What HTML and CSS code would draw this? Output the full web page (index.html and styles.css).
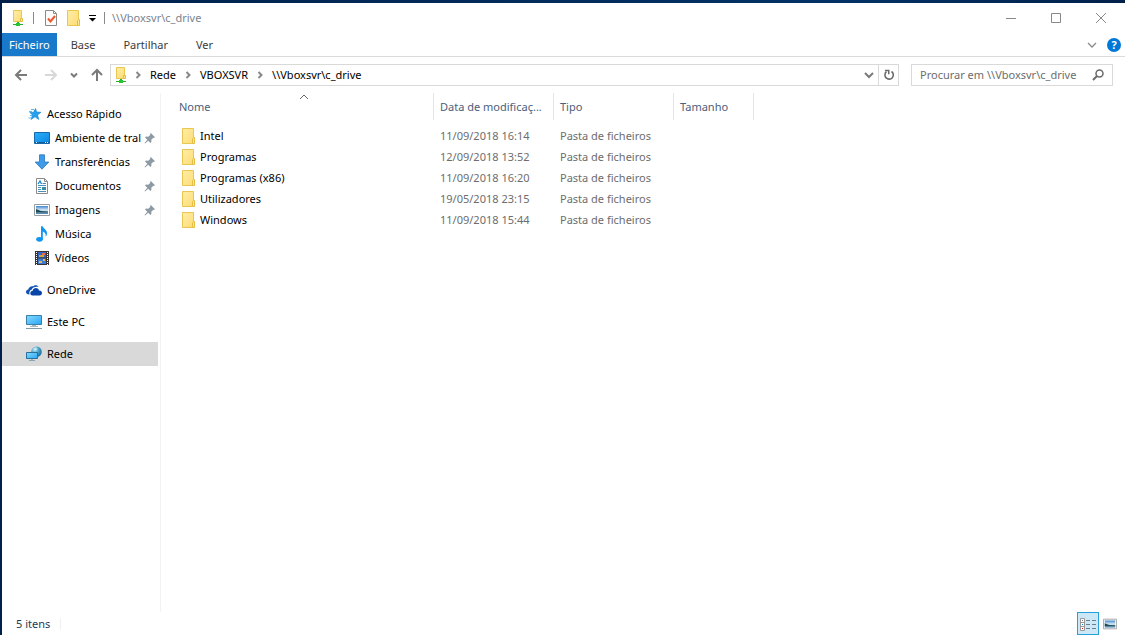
FILE: index.html
```html
<!DOCTYPE html>
<html lang="pt">
<head>
<meta charset="utf-8">
<title>\\Vboxsvr\c_drive</title>
<link rel="stylesheet" href="styles.css">
</head>
<body>
<svg class="sprite" aria-hidden="true">
  <defs>
    <linearGradient id="gold" x1="0" y1="0" x2="1" y2="1"><stop offset="0" stop-color="#ffeda6"/><stop offset="1" stop-color="#fddc76"/></linearGradient>
    <linearGradient id="sky" x1="0" y1="0" x2="1" y2="1"><stop offset="0" stop-color="#27b0fb"/><stop offset="1" stop-color="#0d86e0"/></linearGradient>
    <linearGradient id="glass" x1="0" y1="0" x2="1" y2="1"><stop offset="0" stop-color="#84dcff"/><stop offset="1" stop-color="#2aa4f4"/></linearGradient>
    <linearGradient id="photo" x1="0" y1="0" x2="0" y2="1"><stop offset="0" stop-color="#3f86cf"/><stop offset=".5" stop-color="#d5e8f2"/><stop offset=".7" stop-color="#a9cfe0"/><stop offset="1" stop-color="#4479b0"/></linearGradient>
    <radialGradient id="globe" cx=".35" cy=".3" r=".8"><stop offset="0" stop-color="#b9e2f2"/><stop offset=".5" stop-color="#3f9cc4"/><stop offset="1" stop-color="#1d668f"/></radialGradient>
  </defs>
  <symbol id="folder" viewBox="0 0 16 16">
    <path d="M1.500.5h11v15h-11z" fill="url(#gold)" stroke="#e9c650"/>
    <path d="M11.500 15.500v-5l1-1h1v6z" fill="#ffe793" stroke="#e4bd42"/>
  </symbol>
  <symbol id="netfolder" viewBox="0 0 16 16">
    <path d="M3.500.5h8v11h-8z" fill="url(#gold)" stroke="#e9c650"/>
    <path d="M10.500 11.500v-3h2v3z" fill="#ffe793" stroke="#e4bd42"/>
    <path d="M7 12h2v2h4v1H3v-1h4z" fill="#27b02c"/><path d="M6 13h4v3H6z" fill="#2bc431"/>
  </symbol>
  <symbol id="check" viewBox="0 0 16 16">
    <path d="M2.500.5h8l3 3v12h-11z" fill="#fbfbfb" stroke="#8a8a8a"/>
    <path d="M10.500.5v3h3" fill="none" stroke="#8a8a8a"/>
    <path d="M5 8.500l2.500 3L12 6" fill="none" stroke="#f0562b" stroke-width="2"/>
  </symbol>
  <symbol id="star" viewBox="0 0 16 16">
    <path d="M9.500 2.500l1.200 3.500 4.300.3-3.500 2.600 1.300 4.600-3.800-2.700-4 2.700 1.500-4.500-2.800-2.600 3.900-.1z" fill="#24a0ee" stroke="#1680cf" stroke-width=".6"/>
    <path d="M5 3.500h3M3 5.500h3M4 9.500h2M2.500 12h3" stroke="#5ebcf5"/>
  </symbol>
  <symbol id="desktop" viewBox="0 0 16 16">
    <path d="M.5 2.500h15v11H.5z" fill="url(#sky)" stroke="#1769aa"/>
    <path d="M1 12.500h14" stroke="#135b96"/><path d="M2 12.500h1M11 12.500h1M13 12.500h1" stroke="#fff"/>
  </symbol>
  <symbol id="down" viewBox="0 0 16 16"><path d="M5.500.8h5V8h4.300L8 15.200 1.200 8h4.300z" fill="#3e9be9" stroke="#2876bd" stroke-width=".8"/></symbol>
  <symbol id="doc" viewBox="0 0 16 16">
    <path d="M2.500.5h8l3 3v12h-11z" fill="#fff" stroke="#8a8a8a"/><path d="M10.500.5v3h3" fill="none" stroke="#8a8a8a"/>
    <path d="M4 6l2-3 1.500 3" fill="none" stroke="#1886c8" stroke-width="1.300"/>
    <path d="M8.500 5.500H12M4 7.500h8M4 9.500h3M4 11.500h3M4 13.500h8" stroke="#4a8fb8"/><path d="M8 9h4v3H8z" fill="#3a8ba8"/>
  </symbol>
  <symbol id="image" viewBox="0 0 16 16">
    <path d="M.5 2.500h15v11H.5z" fill="#fff" stroke="#9a9da0"/><path d="M2 4h12v8H2z" fill="url(#photo)"/>
    <path d="M2 7l5 2 7 .5v1H2z" fill="#1e4b55"/>
  </symbol>
  <symbol id="music" viewBox="0 0 16 16">
    <ellipse cx="5.500" cy="13.300" rx="3.300" ry="2.400" fill="#0e97f2"/>
    <path d="M7 .2h1.700c.4 2.400 4.500 3.500 4.300 7.200 0 1.400-.6 2.300-1.400 3 .6-3-.9-4.300-2.800-5v8H7z" fill="#0e97f2"/>
  </symbol>
  <symbol id="video" viewBox="0 0 16 16">
    <path d="M1 1h14v14H1z" fill="#393431"/><path d="M4 2h8v5.500H4z" fill="#3268c5"/><path d="M4 8.500h8V14H4z" fill="#3c78d4"/>
    <path d="M8 3h3v2H8z" fill="#e96a54"/><path d="M5 5h5v2H5z" fill="#d6a239"/><path d="M5 11h3v2H5zM9 9h2v2H9z" fill="#e2bb55"/>
    <path d="M2.500 2v13M13.500 2v13" stroke="#fff" stroke-width="1" stroke-dasharray="1 1"/>
  </symbol>
  <symbol id="cloud" viewBox="0 0 16 16">
    <path d="M3.500 12.500C1.500 12.700 0 11.500 0 10c0-1.400 1-2.300 2.300-2.500C2.600 5 5 3.700 7.200 4.300 8.500 2.800 11.500 2.600 12.500 5 9 4.500 6.500 5.500 5.800 7.500 3.500 8 3 10.500 3.500 12.500z" fill="#1053b4"/>
    <path d="M6.500 13.500c-3 0-3-4.500.2-4.800C7.200 5.300 12 5 13 8.400c3.800-.2 4 5.100.6 5.100z" fill="#0a46a7"/>
  </symbol>
  <symbol id="pc" viewBox="0 0 16 16">
    <path d="M.5 1.500h15v9H.5z" fill="url(#glass)" stroke="#3a7fa8"/><path d="M6 11h4v1H6z" fill="#a3b5c1"/>
    <path d="M4 12.500h8" stroke="#a9bac5"/><path d="M0 14.500h16" stroke="#7f9aaa"/>
  </symbol>
  <symbol id="network" viewBox="0 0 16 16">
    <circle cx="10.500" cy="5.800" r="5.300" fill="url(#globe)"/><path d="M7 3l3-2 1.500 2L9 5z" fill="#d6edf4" opacity=".7"/>
    <path d="M.5 6.500h11v6H.5z" fill="url(#glass)" stroke="#276f9c"/><path d="M3 14.500h6" stroke="#88a6b8"/><path d="M5 13h2v1H5z" fill="#9fb4c0"/>
  </symbol>
  <symbol id="pin" viewBox="0 0 12 12"><path d="M6.800 1L11 5.200l-1 .7-.7-.2-2 2 .1 2.300-1 1-2.200-2.300L1 11.500l-.5-.5L3.300 7.800 1 5.600l1-1 2.300.1 2-2L6 2z" fill="#8e9aa3"/></symbol>
  <symbol id="chev-d" viewBox="0 0 10 10"><path d="M1 3l4 4 4-4" fill="none" stroke="currentColor" stroke-width="1.300"/></symbol>
</svg>

<main class="window">
  <header class="titlebar">
    <svg class="ico"><use href="#netfolder"/></svg>
    <span class="rule"></span>
    <button class="plain" aria-label="Propriedades"><svg class="ico"><use href="#check"/></svg></button>
    <button class="plain" aria-label="Nova pasta"><svg class="ico"><use href="#folder"/></svg></button>
    <button class="plain" aria-label="Personalizar"><svg class="custom" viewBox="0 0 8 8"><path d="M0 1.500h7" stroke="#000"/><path d="M0 4h7L3.500 7.500z"/></svg></button>
    <span class="rule"></span>
    <h1>\\Vboxsvr\c_drive</h1>
    <div class="controls">
      <button aria-label="Minimizar"><svg viewBox="0 0 12 12"><path d="M1 6.500h10"/></svg></button>
      <button aria-label="Maximizar"><svg viewBox="0 0 12 12"><path d="M1.500 1.500h9v9h-9z"/></svg></button>
      <button aria-label="Fechar"><svg viewBox="0 0 12 12"><path d="M1 1l10 10M11 1L1 11"/></svg></button>
    </div>
  </header>

  <nav class="tabs">
    <button class="tab file">Ficheiro</button>
    <button class="tab">Base</button>
    <button class="tab">Partilhar</button>
    <button class="tab">Ver</button>
    <div class="tabs-end">
      <button class="plain" aria-label="Expandir friso"><svg class="mini"><use href="#chev-d"/></svg></button>
      <button class="help" aria-label="Ajuda">?</button>
    </div>
  </nav>

  <div class="navbar">
    <div class="arrows">
      <button class="plain" aria-label="Anterior"><svg class="arrow" viewBox="0 0 14 14"><path d="M13 7H2M7 2L2 7l5 5"/></svg></button>
      <button class="plain" aria-label="Seguinte"><svg class="arrow off" viewBox="0 0 14 14"><path d="M1 7h11M7 2l5 5-5 5"/></svg></button>
      <button class="plain" aria-label="Recentes"><svg class="arrow small" viewBox="0 0 8 8"><path d="M1 2.500l3 3 3-3"/></svg></button>
      <button class="plain" aria-label="Acima"><svg class="arrow" viewBox="0 0 14 14"><path d="M7 13V2M2 7l5-5 5 5"/></svg></button>
    </div>
    <div class="address">
      <svg class="ico"><use href="#netfolder"/></svg>
      <svg class="sep" viewBox="0 0 8 8"><path d="M2.500 1l3 3-3 3"/></svg>
      <a href="#rede">Rede</a>
      <svg class="sep" viewBox="0 0 8 8"><path d="M2.500 1l3 3-3 3"/></svg>
      <a href="#vboxsvr">VBOXSVR</a>
      <svg class="sep" viewBox="0 0 8 8"><path d="M2.500 1l3 3-3 3"/></svg>
      <a href="#c_drive">\\Vboxsvr\c_drive</a>
      <button class="plain drop" aria-label="Localizações anteriores"><svg class="mini" viewBox="0 0 10 10"><path d="M1 3l4 4 4-4" fill="none" stroke="#7a7a7a" stroke-width="2"/></svg></button>
      <button class="plain refresh" aria-label="Atualizar"><svg viewBox="0 0 12 12"><path d="M8.500 2.500a4.200 4.200 0 1 1-5 .2" fill="none" stroke="#6a6a6a" stroke-width="1.600"/><path d="M2 .8h4.500v4.500h-1.500V2.300H2z" fill="#6a6a6a"/></svg></button>
    </div>
    <label class="search">
      <input type="text" placeholder="Procurar em \\Vboxsvr\c_drive" aria-label="Procurar">
      <svg viewBox="0 0 12 12"><circle cx="7.500" cy="4.500" r="3.500" fill="none" stroke="#6a6a6a" stroke-width="1.500"/><path d="M5 7L1 11" stroke="#6a6a6a" stroke-width="2"/></svg>
    </label>
  </div>

  <div class="content">
    <nav class="sidebar">
      <a class="item" href="#rapido"><svg class="ico"><use href="#star"/></svg><span>Acesso Rápido</span></a>
      <a class="item sub" href="#ambiente"><svg class="ico"><use href="#desktop"/></svg><span>Ambiente de tral</span><svg class="pin"><use href="#pin"/></svg></a>
      <a class="item sub" href="#transf"><svg class="ico"><use href="#down"/></svg><span>Transferências</span><svg class="pin"><use href="#pin"/></svg></a>
      <a class="item sub" href="#docs"><svg class="ico"><use href="#doc"/></svg><span>Documentos</span><svg class="pin"><use href="#pin"/></svg></a>
      <a class="item sub" href="#imagens"><svg class="ico"><use href="#image"/></svg><span>Imagens</span><svg class="pin"><use href="#pin"/></svg></a>
      <a class="item sub" href="#musica"><svg class="ico"><use href="#music"/></svg><span>Música</span></a>
      <a class="item sub" href="#videos"><svg class="ico"><use href="#video"/></svg><span>Vídeos</span></a>
      <a class="item root" href="#onedrive"><svg class="ico"><use href="#cloud"/></svg><span>OneDrive</span></a>
      <a class="item root" href="#pc-este"><svg class="ico"><use href="#pc"/></svg><span>Este PC</span></a>
      <a class="item root selected" href="#rede"><svg class="ico"><use href="#network"/></svg><span>Rede</span></a>
    </nav>
    <section class="files">
      <table>
        <colgroup><col class="c-name"><col class="c-date"><col class="c-type"><col class="c-size"></colgroup>
        <thead><tr>
          <th>Nome<svg class="sort" viewBox="0 0 10 6"><path d="M1 5l4-4 4 4"/></svg></th>
          <th>Data de modificaç...</th><th>Tipo</th><th>Tamanho</th>
        </tr></thead>
        <tbody>
          <tr><td><div class="name"><svg class="ico"><use href="#folder"/></svg>Intel</div></td><td>11/09/2018 16:14</td><td>Pasta de ficheiros</td><td></td></tr>
          <tr><td><div class="name"><svg class="ico"><use href="#folder"/></svg>Programas</div></td><td>12/09/2018 13:52</td><td>Pasta de ficheiros</td><td></td></tr>
          <tr><td><div class="name"><svg class="ico"><use href="#folder"/></svg>Programas (x86)</div></td><td>11/09/2018 16:20</td><td>Pasta de ficheiros</td><td></td></tr>
          <tr><td><div class="name"><svg class="ico"><use href="#folder"/></svg>Utilizadores</div></td><td>19/05/2018 23:15</td><td>Pasta de ficheiros</td><td></td></tr>
          <tr><td><div class="name"><svg class="ico"><use href="#folder"/></svg>Windows</div></td><td>11/09/2018 15:44</td><td>Pasta de ficheiros</td><td></td></tr>
        </tbody>
      </table>
    </section>
  </div>

  <footer class="status">
    <span class="count">5 itens</span>
    <div class="views">
      <button class="view active" aria-label="Detalhes"><svg class="ico" viewBox="0 0 16 16"><path d="M.5 2.500h4v12h-4zM.5 6.500h4M.5 10.500h4" fill="#fff" stroke="#999"/><path d="M2 4h1v1H2z" fill="#777"/><path d="M2 8h1v1H2z" fill="#1686d0"/><path d="M2 12h1v1H2z" fill="#c22"/><path d="M6 4.500h4M12 4.500h4M6 8.500h4M12 8.500h4M6 12.500h4M12 12.500h4" stroke="#6d7e88"/></svg></button>
      <button class="view" aria-label="Ícones grandes"><svg class="thumb" viewBox="0 0 16 16"><use href="#image"/></svg></button>
    </div>
  </footer>
</main>
</body>
</html>
```
FILE: styles.css
```css
* { box-sizing: border-box; }

body {
  margin: 0;
  min-height: 100vh;
  display: flex;
  padding: 3px 0 0 2px;
  background: linear-gradient(90deg, #00204a, #013266 75%, #00204a);
  font: 11px/16px "Noto Sans", "Open Sans", sans-serif;
  color: #000;
}

button, input { font: inherit; color: inherit; }
button { border: 0; padding: 0; background: none; }
a { color: inherit; text-decoration: none; }
svg { display: block; flex: none; }

.sprite { position: absolute; width: 0; height: 0; }
.ico { width: 16px; height: 16px; }
.mini { width: 10px; height: 10px; }

.window {
  flex: 1;
  min-width: 0;
  display: flex;
  flex-direction: column;
  background: #fff;
}

.titlebar {
  display: flex;
  align-items: center;
  gap: 7px;
  height: 30px;
  padding-left: 8px;
}
.titlebar h1 { margin: 0; font-size: 11px; font-weight: 400; color: #7b8490; }
.rule { width: 1px; height: 12px; background: #8a8a8a; }
.titlebar .rule + button { margin-left: 2px; }
.custom { width: 8px; height: 8px; }
.controls { display: flex; margin-left: auto; padding-right: 2px; }
.controls button { width: 45px; height: 28px; display: grid; place-items: center; }
.controls svg { width: 12px; height: 12px; fill: none; stroke: #888; }

.tabs {
  display: flex;
  height: 24px;
  border-bottom: 1px solid #dadbdc;
}
.tab { padding: 0 14px; color: #3b3b3b; }
.tab.file { padding: 0 7px; background: #1979ca; color: #fff; }
.tabs-end {
  display: flex;
  align-items: center;
  gap: 10px;
  margin-left: auto;
  padding-right: 4px;
  color: #8a8a8a;
}
.help {
  width: 14px;
  height: 14px;
  border-radius: 50%;
  background: #0078d7;
  color: #fff;
  font-weight: 700;
  line-height: 14px;
}

.navbar { display: flex; align-items: center; padding: 7px 12px; }
.arrows { display: flex; align-items: center; gap: 12px; padding-right: 6px; }
.arrow { width: 14px; height: 14px; fill: none; stroke: #7a7a7a; stroke-width: 2; }
.arrow.off { margin-left: 4px; stroke: #d8d8d8; }
.arrow.small { width: 8px; height: 8px; }
.address {
  flex: 1;
  display: flex;
  align-items: center;
  gap: 8px;
  height: 22px;
  margin-right: 12px;
  padding-left: 2px;
  border: 1px solid #d9d9d9;
}
.address .ico { margin-right: -3px; }
.sep { width: 8px; height: 8px; fill: none; stroke: #888; stroke-width: 2; }
.drop { margin-left: auto; }
.refresh {
  align-self: stretch;
  display: grid;
  place-items: center;
  width: 20px;
  margin-left: -4px;
  border-left: 1px solid #d9d9d9;
}
.refresh svg, .search svg { width: 12px; height: 12px; }
.search {
  display: flex;
  align-items: center;
  width: 202px;
  height: 22px;
  padding: 0 8px;
  border: 1px solid #d9d9d9;
}
.search input { flex: 1; min-width: 0; padding: 0; border: 0; outline: 0; background: none; }
.search input::placeholder { color: #6d6d6d; opacity: 1; }

.content { flex: 1; display: flex; }
.sidebar {
  flex: none;
  width: 159px;
  padding: 9px 2px 0 0;
  border-right: 1px solid #f3f3f3;
}
.item {
  display: flex;
  align-items: center;
  gap: 5px;
  height: 24px;
  padding-left: 24px;
}
.item.sub { padding-left: 32px; }
.item.root { margin-top: 8px; }
.item.selected { background: #d9d9d9; }
.item span { flex: 1; min-width: 0; white-space: nowrap; }
.pin { width: 12px; height: 12px; margin: 0 2px 0 -4px; }

.files { flex: 1; min-width: 0; }
table { table-layout: fixed; width: 593px; border-collapse: separate; border-spacing: 0; }
.c-name { width: 273px; }
.c-date, .c-type { width: 120px; }
.c-size { width: 80px; }
th {
  position: relative;
  height: 27px;
  padding: 0 6px;
  border-right: 1px solid #e5e5e5;
  color: #4c607a;
  font-weight: 400;
  text-align: left;
  white-space: nowrap;
}
th:first-child { padding-left: 18px; }
.sort { position: absolute; top: 1px; left: 138px; width: 10px; height: 6px; fill: none; stroke: #666; }
tbody::before { content: ""; display: block; height: 5px; }
td { height: 21px; padding: 0 6px; color: #6d6d6d; white-space: nowrap; }
td:first-child { padding-left: 20px; }
.name { display: flex; align-items: center; gap: 3px; color: #000; }

.status {
  display: flex;
  align-items: center;
  height: 23px;
  padding: 0 4px 0 14px;
}
.count { padding-right: 10px; border-right: 1px solid #f0f0f0; line-height: 12px; color: #1e395b; }
.views { display: flex; margin-left: auto; }
.view { display: grid; place-items: center; width: 22px; height: 23px; }
.view.active { background: #cce8f6; border: 1px solid #26a0da; }
.thumb { width: 14px; height: 14px; }
```
